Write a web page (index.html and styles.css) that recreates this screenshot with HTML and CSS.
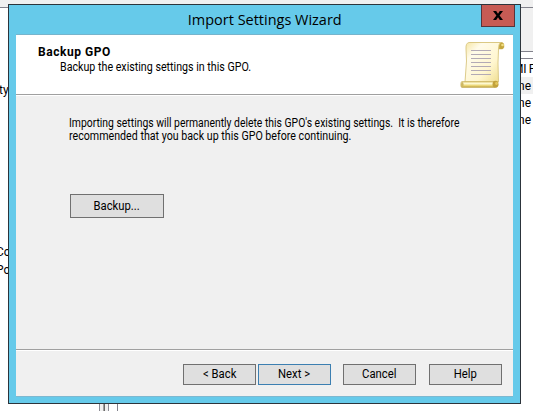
FILE: index.html
```
<!DOCTYPE html>
<html lang="en">
<head>
<meta charset="utf-8">
<title>Import Settings Wizard</title>
<link rel="stylesheet" href="styles.css">
</head>
<body>
<div class="desktop">
  <div class="console">
    <div class="tree">
      <div class="tree-item first">ty</div>
      <div class="tree-item second">Co</div>
      <div class="tree-item third">Po</div>
    </div>
    <div class="splitter"></div>
    <div class="details">
      <div class="toolbar"></div>
      <div class="list">
        <div class="cell head">MI F</div>
        <div class="cell shaded">ne</div>
        <div class="cell">ne</div>
        <div class="cell">ne</div>
      </div>
    </div>
  </div>
  <section class="window">
    <header class="titlebar">
      <h1 class="title"><span>Import Settings Wizard</span></h1>
      <button class="close" aria-label="Close"><svg width="10" height="9" viewBox="0 0 10 9"><path d="M0 0h3.2L5 2.7 6.8 0H10L6.6 4.400 10 9H6.800L5 6.200 3.200 9H0l3.400-4.600z"/></svg></button>
    </header>
    <div class="client">
      <div class="banner">
        <div class="banner-text">
          <h2>Backup GPO</h2>
          <p><span>Backup the existing settings in this GPO.</span></p>
        </div>
        <svg class="scroll" width="46" height="48" viewBox="0 0 46 48">
          <defs>
            <linearGradient id="paper" x1="0" y1="0" x2="1" y2="1"><stop offset="0" stop-color="#f5e5a0"/><stop offset=".25" stop-color="#fffbea"/><stop offset=".65" stop-color="#fff6cf"/><stop offset="1" stop-color="#eedc8c"/></linearGradient>
            <linearGradient id="roll" x1="0" y1="0" x2="0" y2="1"><stop offset="0" stop-color="#dfcb78"/><stop offset=".35" stop-color="#fffbd5"/><stop offset=".7" stop-color="#e9d36e"/><stop offset="1" stop-color="#b6993e"/></linearGradient>
          </defs>
          <path d="M10 1.500h31.500c3 0 3.500 6 .5 6.500h-4z" fill="url(#roll)" stroke="#d0bd78" stroke-width=".6"/>
          <ellipse cx="41.500" cy="4.800" rx="2.500" ry="3.200" fill="#c4a63d"/>
          <circle cx="42.500" cy="4" r="1.300" fill="#f1df85"/>
          <path d="M9 1.500C6.500 2 5.800 4 6 8l.5 12L5 41h33.500L38 22l.5-14c.2-3 .5-6 2.500-6.500z" fill="url(#paper)" stroke="#d8c57e" stroke-width=".9"/>
          <path d="M11 9.500h20M11 13.500h20M11 17.500h20M11 21.500h20M11 25.500h20M11 29.500h20M11 33.500h20" stroke="#b3aab5" fill="none"/>
          <path d="M2 40.500h32.500c4 0 4.500 6 0 6H2c-1.700 0-1.700-6 0-6z" fill="url(#roll)" stroke="#c8b05a" stroke-width=".6"/>
          <ellipse cx="35.500" cy="43.200" rx="3" ry="3.400" fill="#c2a23c"/>
          <circle cx="36.500" cy="42.500" r="1.400" fill="#e3c75c"/>
          <ellipse cx="2.300" cy="43.500" rx="1.300" ry="2.500" fill="#cdb763"/>
        </svg>
      </div>
      <div class="content">
        <p class="message"><span>Importing settings will permanently delete this GPO's existing settings.&nbsp; It is therefore</span><br><span class="second-line">recommended that you back up this GPO before continuing.</span></p>
        <button class="btn backup"><span>Backup...</span></button>
      </div>
      <footer class="actions">
        <button class="btn back"><span>&lt; Back</span></button>
        <button class="btn next"><span>Next &gt;</span></button>
        <button class="btn cancel"><span>Cancel</span></button>
        <button class="btn help"><span>Help</span></button>
      </footer>
    </div>
  </section>
</div>
</body>
</html>
```
FILE: styles.css
```
* { box-sizing: border-box; margin: 0; padding: 0; }
body {
  width: 533px; height: 411px; overflow: hidden;
  font: 12px/13px Roboto, "Liberation Sans", sans-serif;
  color: #000; background: #fff;
}
h1, h2 { font-size: inherit; }
button { font: inherit; color: inherit; }
.desktop { position: relative; height: 411px; overflow: hidden; }
.console { display: flex; height: 411px; border-top: 7px solid #f0f0f0; }
.tree { flex: 0 0 99px; border-top: 1px solid #82828c; overflow: hidden; }
.tree-item { height: 18px; line-height: 18px; margin-left: -4px; white-space: nowrap; }
.tree-item.first { margin-top: 73px; margin-left: -1px; }
.tree-item.second { margin-top: 144px; }
.splitter {
  flex: 0 0 10px; border: 1px solid #8c8c96; border-width: 0 1px;
  background: linear-gradient(90deg, #f0f0f0 3px, #a0a0a0 3px, #a0a0a0 4px, #696969 4px, #696969 5px, #f0f0f0 5px);
}
.details { flex: 1; min-width: 0; display: flex; flex-direction: column; margin-left: 8px; border-left: 1px solid #82828c; }
.toolbar { height: 45px; border-top: 1px solid #82828c; border-bottom: 1px solid #82828c; background: #f0f0f0; }
.list { margin-top: 6px; border-top: 1px solid #82828c; padding-left: 400px; }
.cell { height: 17px; line-height: 19px; white-space: nowrap; }
.cell.head { height: 18px; margin-left: -5px; line-height: 20px; letter-spacing: -.3px; }
.cell.shaded { background: #f0f0f0; }
.window {
  position: absolute; left: 8px; top: 4px; width: 513px; height: 400px;
  display: flex; flex-direction: column;
  padding: 0 7px 6px; border: 1px solid #2c343b; background: #66caea;
}
.titlebar { height: 29px; display: flex; justify-content: flex-end; margin-right: -2px; }
.title {
  flex: 1; padding-left: 32px; text-align: center; white-space: nowrap;
  font: 15px/29px "Open Sans", "Noto Sans", sans-serif;
}
.title span { display: inline-block; transform: scaleX(.965); }
.close {
  width: 34px; height: 22px; display: grid; place-items: center;
  border: 1px solid #59343a; border-top: 0; background: #c75b54;
}
.client {
  flex: 1; display: flex; flex-direction: column;
  border-top: 1px solid #76b4cc; border-bottom: 1px solid #7db8d0; background: #f0f0f0;
}
.banner {
  height: 61px; display: flex; justify-content: space-between; padding: 6px 7px 0 22px;
  border-bottom: 1px solid #fff; box-shadow: inset 0 -1px #a0a0a0; background: #fff;
}
.banner-text { padding-top: 5px; white-space: nowrap; }
.banner h2 { letter-spacing: .55px; }
.banner p { padding: 2px 0 0 22px; }
.banner p span { display: inline-block; transform: scaleX(.89); transform-origin: left; }
.content { flex: 1; padding: 21px 0 0 53px; }
.message { height: 26px; white-space: nowrap; }
.message span { display: inline-block; transform: scaleX(.865); transform-origin: left; }
.message .second-line { transform: scaleX(.889); }
.btn { border: 1px solid #707070; background: #dfdfdf; }
.btn span { display: inline-block; transform: scaleX(.94); }
.backup { display: block; width: 94px; height: 24px; margin: 51px 0 0 1px; }
.actions {
  height: 47px; display: flex; padding: 14px 11px 0 0; justify-content: flex-end;
  border-top: 1px solid #a0a0a0; box-shadow: inset 0 1px #fff;
}
.actions .btn { width: 73px; height: 21px; }
.actions .next { margin-left: 2px; border-color: #3c7fb1; }
.actions .cancel { margin-left: 12px; }
.actions .help { margin-left: 13px; }
```
